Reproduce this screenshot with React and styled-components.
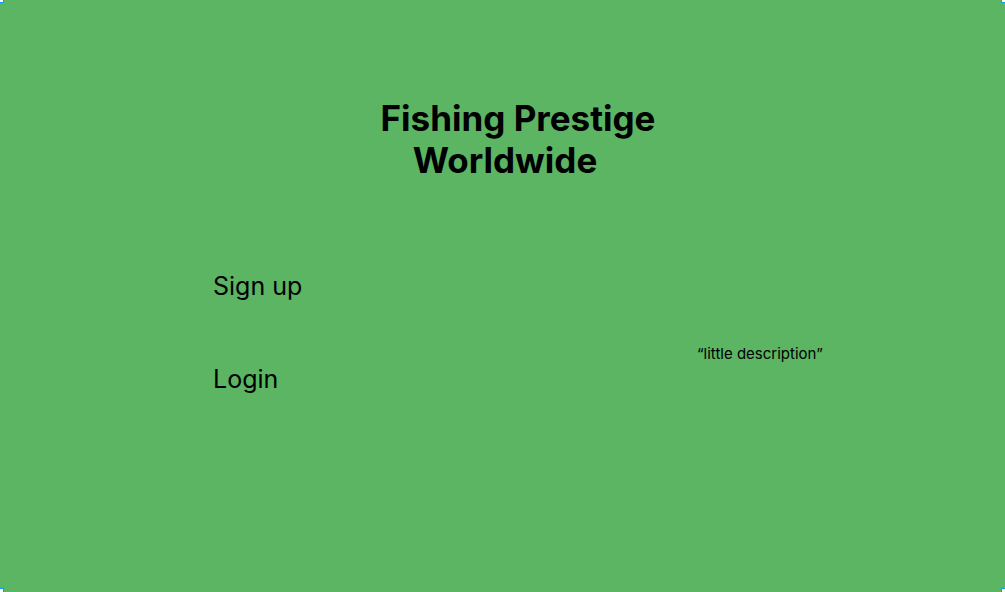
import React from "react";
import styled, { createGlobalStyle } from "styled-components";

const Global = createGlobalStyle`
    html, body {
        margin: 0;
        padding: 0;
        overflow: hidden;
    }
    body {
        font-family: Inter, "Noto Sans", sans-serif;
        color: #000;
    }
`;

const Frame = styled.main`
    position: relative;
    width: 1005px;
    height: 592px;
    background-color: #5bb563;
    display: flex;
    flex-direction: column;
    overflow: hidden;
`;

const Header = styled.header`
    padding-top: 97px;
    display: flex;
    justify-content: center;
`;

const Title = styled.h1`
    margin: 0;
    font-size: 35px;
    font-weight: 700;
    line-height: 42px;
    text-align: center;
`;

const TitleLine = styled.span`
    display: block;
    padding-left: ${(p) => p.$shift || 0}px;
`;

const Body = styled.section`
    margin-top: 90px;
    padding-left: 213px;
    display: grid;
    grid-template-columns: 484px 1fr;
`;

const Links = styled.nav`
    display: flex;
    flex-direction: column;
    gap: 63px;
`;

const NavLink = styled.a`
    font-size: 25px;
    line-height: 30px;
    color: #000;
    text-decoration: none;
`;

const Description = styled.p`
    margin: 74px 0 0;
    font-size: 15px;
    line-height: 18px;
`;

const Handle = styled.span`
    position: absolute;
    width: 7px;
    height: 7px;
    box-sizing: border-box;
    background: #fff;
    border: 1px solid #0d99ff;
    ${(p) => (p.$top ? "top: -4px;" : "bottom: -3px;")}
    ${(p) => (p.$left ? "left: -3px;" : "right: -3px;")}
`;

const App = () => {
    return (
        <>
            <Global />
            <Frame>
                <Header>
                    <Title>
                        <TitleLine $shift={31}>Fishing Prestige</TitleLine>
                        <TitleLine $shift={5}>Worldwide</TitleLine>
                    </Title>
                </Header>
                <Body>
                    <Links>
                        <NavLink href="#">Sign up</NavLink>
                        <NavLink href="#">Login</NavLink>
                    </Links>
                    <Description>“little description”</Description>
                </Body>
                <Handle $top $left />
                <Handle $left />
                <Handle $top />
                <Handle />
            </Frame>
        </>
    );
};

export default App;
